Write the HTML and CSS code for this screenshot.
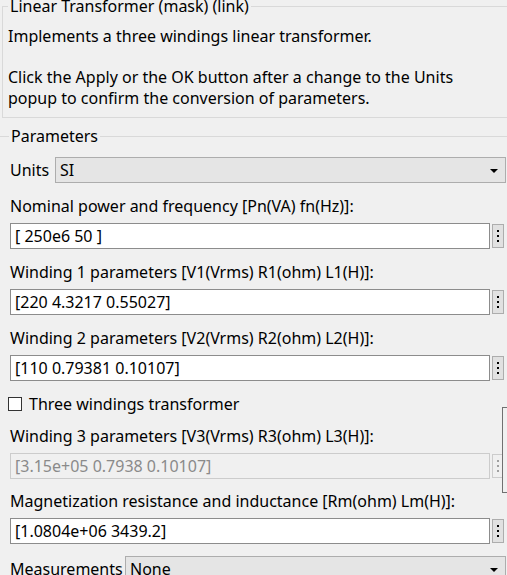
FILE: index.html
```html
<!DOCTYPE html>
<html>
<head>
<meta charset="utf-8">
<link rel="stylesheet" href="styles.css">
</head>
<body>
<div class="dlg">
  <fieldset class="grp grp-top">
    <legend class="legend">Linear Transformer (mask) (link)</legend>
    <p class="desc">Implements a three windings linear transformer.</p>
    <p class="desc desc-gap">Click the Apply or the OK button after a change to the Units<br>popup to confirm the conversion of parameters.</p>
  </fieldset>

  <fieldset class="grp grp-params">
    <legend class="legend">Parameters</legend>

    <div class="row row-units">
      <span class="row-lbl lbl-units">Units</span>
      <div class="combo combo-units">SI<span class="arrow"></span></div>
    </div>

    <div class="lbl">Nominal power and frequency [Pn(VA) fn(Hz)]:</div>
    <div class="field">
      <div class="edit">[ 250e6 50 ]</div>
      <div class="more"><i></i><i></i><i></i></div>
    </div>

    <div class="lbl">Winding 1 parameters [V1(Vrms) R1(ohm) L1(H)]:</div>
    <div class="field">
      <div class="edit">[220 4.3217 0.55027]</div>
      <div class="more"><i></i><i></i><i></i></div>
    </div>

    <div class="lbl">Winding 2 parameters [V2(Vrms) R2(ohm) L2(H)]:</div>
    <div class="field">
      <div class="edit">[110 0.79381 0.10107]</div>
      <div class="more"><i></i><i></i><i></i></div>
    </div>

    <label class="check-row">
      <span class="check"></span>
      <span>Three windings transformer</span>
    </label>

    <div class="lbl lbl-after-check">Winding 3 parameters [V3(Vrms) R3(ohm) L3(H)]:</div>
    <div class="field">
      <div class="edit edit-disabled">[3.15e+05 0.7938 0.10107]</div>
      <div class="more more-disabled"><i></i><i></i><i></i></div>
    </div>

    <div class="lbl lbl-mag">Magnetization resistance and inductance [Rm(ohm) Lm(H)]:</div>
    <div class="field">
      <div class="edit">[1.0804e+06 3439.2]</div>
      <div class="more"><i></i><i></i><i></i></div>
    </div>

    <div class="row row-meas">
      <span class="row-lbl lbl-meas">Measurements</span>
      <div class="combo combo-meas">None<span class="arrow"></span></div>
    </div>
  </fieldset>

  <div class="side-box"></div>
</div>
</body>
</html>
```
FILE: styles.css
```css
html, body {
  margin: 0;
  padding: 0;
  background: #f0f0f0;
  overflow: hidden;
}

.dlg {
  position: relative;
  width: 507px;
  height: 575px;
  overflow: hidden;
  font-family: "Noto Sans", "Open Sans", sans-serif;
  font-size: 16px;
  line-height: 20px;
  color: #000;
}

.grp {
  border: 1px solid #d9d9d9;
  margin: 0;
  min-width: 0;
}

.legend {
  padding: 0 2px;
  line-height: 20px;
}

.grp-top {
  margin: -4px -20px 0 2px;
  padding: 0 5px 8px 5px;
}

.desc {
  margin: 10px 0 0 0;
  line-height: 21px;
}

.desc-gap {
  margin-top: 20px;
}

.grp-params {
  margin: 8px -20px 0 -2px;
  padding: 0 0 20px 11px;
}

.grp-params .legend {
  margin-left: -1px;
}

.row {
  display: flex;
  align-items: center;
  height: 26px;
}

.row-units {
  margin-top: 11px;
}

.row-meas {
  margin-top: 12px;
}

.row-lbl {
  flex: none;
}

.lbl-units {
  width: 45px;
}

.lbl-meas {
  width: 115px;
}

.combo {
  position: relative;
  box-sizing: border-box;
  height: 26px;
  border: 1px solid #adadad;
  background: #e5e5e5;
  padding: 0 4px;
  line-height: 24px;
}

.combo-units {
  width: 451px;
}

.combo-meas {
  width: 381px;
}

.arrow {
  position: absolute;
  right: 7px;
  top: 11px;
  width: 0;
  height: 0;
  border-left: 4px solid transparent;
  border-right: 4px solid transparent;
  border-top: 4px solid #000;
}

.lbl {
  margin-top: 13px;
  height: 20px;
  white-space: nowrap;
}

.lbl-after-check {
  margin-top: 12px;
}

.lbl-mag {
  margin-top: 12px;
}

.field {
  display: flex;
  align-items: center;
  margin-top: 7px;
  height: 26px;
}

.edit {
  box-sizing: border-box;
  width: 480px;
  height: 26px;
  border: 1px solid #8c8c8c;
  background: #fff;
  padding: 0 4px;
  line-height: 24px;
  white-space: nowrap;
}

.edit-disabled {
  background: #f0f0f0;
  border-color: #cccccc;
  color: #8a8a8a;
}

.more {
  box-sizing: border-box;
  margin-left: 2px;
  width: 12px;
  height: 24px;
  border: 1px solid #adadad;
  background: #e1e1e1;
  display: flex;
  flex-direction: column;
  align-items: center;
  justify-content: center;
  gap: 3px;
}

.more i {
  display: block;
  width: 2px;
  height: 2px;
  background: #000;
}

.more-disabled {
  border-color: #cccccc;
  background: #f0f0f0;
}

.more-disabled i {
  background: #a0a0a0;
}

.check-row {
  display: flex;
  align-items: center;
  gap: 7px;
  margin-top: 13px;
  margin-left: -2px;
  height: 20px;
}

.check {
  box-sizing: border-box;
  width: 14px;
  height: 14px;
  border: 1px solid #333;
  background: #fff;
}

.side-box {
  position: absolute;
  left: 502px;
  top: 407px;
  width: 20px;
  height: 84px;
  border: 1px solid #707070;
  background: #f0f0f0;
}
```
